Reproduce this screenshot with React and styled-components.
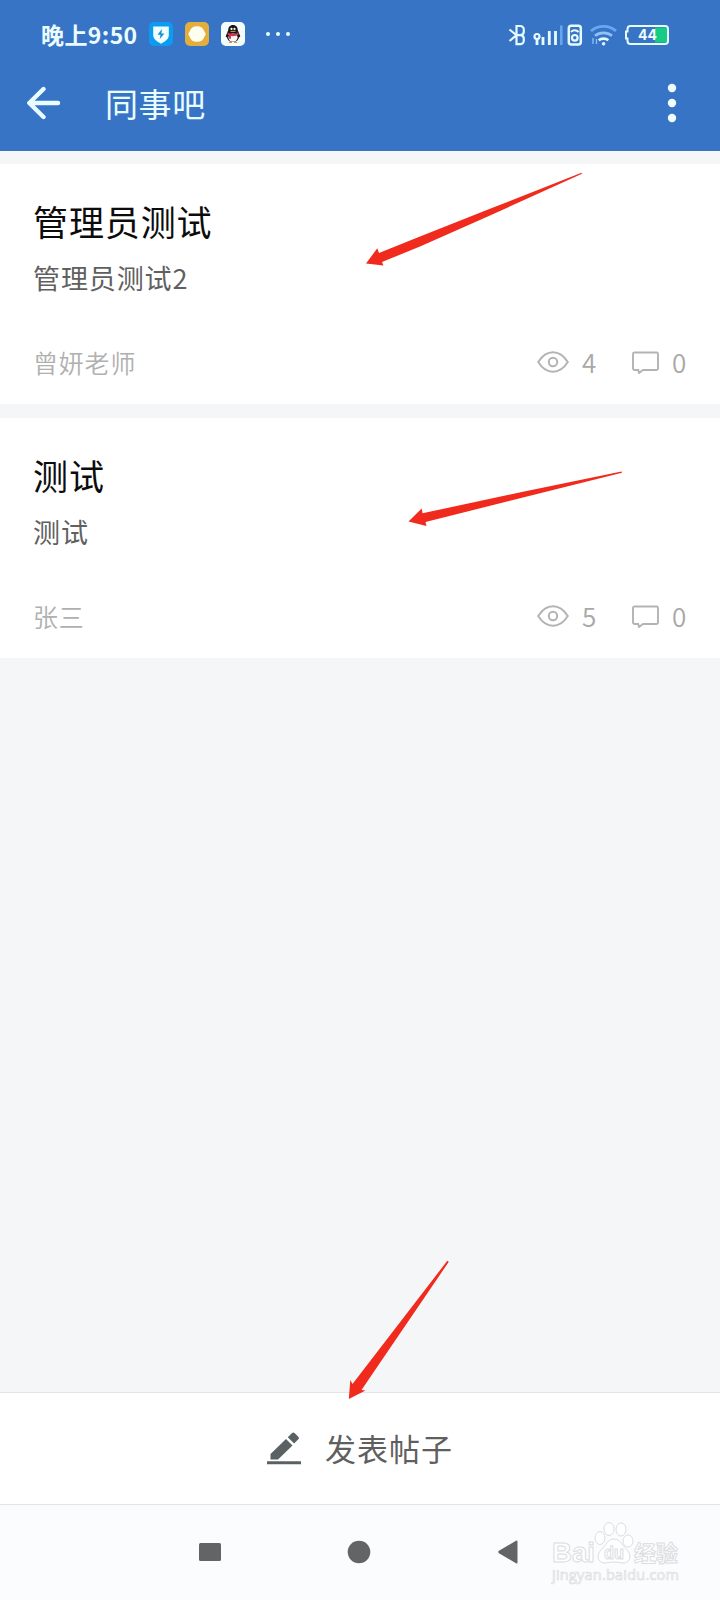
import styled, { createGlobalStyle } from "styled-components";

const posts = [
  { id: 1, title: "管理员测试", text: "管理员测试2", author: "曾妍老师", views: 4, comments: 0 },
  { id: 2, title: "测试", text: "测试", author: "张三", views: 5, comments: 0 },
];

const StatusBar = () => {
  return (
    <StatusWrapper>
      <Clock>晚上9:50</Clock>
      <AppIcons>
        <svg width="24" height="24" viewBox="0 0 24 24">
          <rect width="24" height="24" rx="5" fill="#0b9bf0" />
          <path d="M4.200 4.500h15.600v8.500c0 4-3.600 6.500-7.800 8.700-4.200-2.200-7.800-4.700-7.800-8.700z" fill="#effeff" />
          <path d="M13 7l-4.500 5.700h3l-.8 4.200 4.700-5.400h-3z" fill="#1590c8" />
        </svg>
        <svg width="24" height="24" viewBox="0 0 24 24">
          <rect width="24" height="24" rx="5" fill="#e3ae3b" />
          <path d="M12 4.300c4 0 6 1.900 7 4.500l1.800 3.200-1.800 3.400c-1 2.600-3 4.300-7 4.300s-6-1.700-7-4.300L3.200 12 5 8.800c1-2.600 3-4.500 7-4.500z" fill="#fffff0" />
        </svg>
        <svg width="24" height="24" viewBox="0 0 24 24">
          <rect width="24" height="24" rx="5" fill="#f4fdfc" />
          <path d="M12 3c-3.200 0-4.800 2.400-4.800 5.200L5 13.500c-.5 1.600.1 2.300 1 1.200 0 2.700 2.200 5.300 6 5.300s6-2.600 6-5.300c.9 1.100 1.500.4 1-1.200l-2.200-5.300C16.800 5.400 15.200 3 12 3z" fill="#17151a" />
          <ellipse cx="12" cy="15.600" rx="4.600" ry="4.200" fill="#fff4f4" />
          <path d="M6.800 10.300c3 2 7.400 2 10.400 0l.4 2.200c-2.500 1.600-5.500 1.900-7.600 1.500v2.800H8v-3.400l-1.600-.9z" fill="#cf3551" />
          <circle cx="10.500" cy="6.900" r="1.100" fill="#fff" />
          <circle cx="13.500" cy="6.900" r="1.100" fill="#fff" />
          <path d="M9.500 9.400h5" stroke="#d9a22e" strokeWidth="1" />
          <path d="M7.800 20.400h3.200M13 20.400h3.200" stroke="#c79a50" strokeWidth="1.300" />
        </svg>
      </AppIcons>
      <svg width="26" height="4" viewBox="0 0 26 4" fill="#e8feff">
        <circle cx="3" cy="2" r="2" />
        <circle cx="13" cy="2" r="2" />
        <circle cx="23" cy="2" r="2" />
      </svg>
      <SystemIcons>
        <svg width="162" height="24" viewBox="0 0 162 24" fill="none" stroke="#e6fbff" strokeWidth="2.200">
          <path d="M1.500 6.500L8.500 12.200 1.500 18M8.500 12.200h4M8.500 3h3.700a3.600 3.600 0 0 1 3.600 3.600v2a3.600 3.600 0 0 1-3.300 3.600 3.600 3.600 0 0 1 3.300 3.600v1.800a3.600 3.600 0 0 1-3.600 3.600H8.500z" />
          <circle cx="29" cy="13.500" r="2.500" />
          <path d="M29 16v6M35 14v8M41.300 8v14M47.500 8v14" strokeWidth="2.800" />
          <path d="M53.300 2.500v19.500" stroke="#6aa7f2" strokeWidth="2.500" />
          <rect x="60.800" y="2.800" width="12" height="18.800" rx="2.500" strokeWidth="2.500" />
          <circle cx="66.800" cy="14.800" r="2.800" />
          <path d="M63 9c2-2.500 5.500-2.500 7.600 0" strokeWidth="2" />
          <g strokeWidth="2.700">
            <path d="M83 8c7-6.300 18-6.300 25 0" stroke="#6aa7f2" />
            <path d="M87 12.800c5-4 12-4 17 0" stroke="#8fc1f8" />
            <path d="M90.800 17.200c2.500-2 7-2 9.500 0" />
          </g>
          <path d="M85 15v6M88.500 16v5" stroke="#8fc1f8" strokeWidth="1.300" />
          <circle cx="95.600" cy="20.800" r="1.300" fill="#e6fbff" strokeWidth="1" />
          <path d="M147 4.500h10.500a2 2 0 0 1 2 2v11a2 2 0 0 1-2 2H147z" fill="#16cb83" stroke="none" />
          <path d="M122.500 3h34.500a3 3 0 0 1 3 3v12a3 3 0 0 1-3 3h-34.500a3 3 0 0 1-3-3v-2.500h-1.500v-7h1.500V6a3 3 0 0 1 3-3z" strokeWidth="2" />
        </svg>
        <Percent>44</Percent>
      </SystemIcons>
    </StatusWrapper>
  );
};

const Post = ({ post }) => {
  return (
    <Card>
      <h2>{post.title}</h2>
      <p>{post.text}</p>
      <CardFooter>
        <Author>{post.author}</Author>
        <svg width="32" height="22" viewBox="0 0 32 22" fill="none" stroke="#b3b3b3" strokeWidth="2">
          <path d="M1.200 11C5 5 9.500 1.200 16 1.200S27 5 30.800 11C27 17 22.500 20.800 16 20.800S5 17 1.200 11z" />
          <circle cx="16" cy="11" r="4.200" />
        </svg>
        <Count $gap="13px">{post.views}</Count>
        <CommentIcon width="27" height="23" viewBox="0 0 27 23" fill="none" stroke="#b3b3b3" strokeWidth="1.900">
          <path d="M3 1.500h21.500a1.500 1.500 0 0 1 1.500 1.500v14.500a1.500 1.500 0 0 1-1.500 1.500H11L7 22l-.8-3H3A1.800 1.800 0 0 1 1 17.500V3A1.500 1.500 0 0 1 3 1.500z" />
        </CommentIcon>
        <Count $gap="13px">{post.comments}</Count>
      </CardFooter>
    </Card>
  );
};

const App = () => {
  return (
    <Page>
      <GlobalStyle />
      <Header>
        <StatusBar />
        <TitleBar>
          <svg width="34" height="34" viewBox="0 0 34 34" fill="none" stroke="#e9fcff" strokeWidth="4.400" strokeLinecap="round" strokeLinejoin="round">
            <path d="M16.500 3L2.300 17l14.200 14M3 17h28" />
          </svg>
          <h1>同事吧</h1>
          <svg width="10" height="40" viewBox="0 0 10 40" fill="#effdff">
            <circle cx="5" cy="5" r="4.200" />
            <circle cx="5" cy="20" r="4.200" />
            <circle cx="5" cy="35" r="4.200" />
          </svg>
        </TitleBar>
      </Header>
      <Feed>
        {posts.map((post) => (
          <Post key={post.id} post={post} />
        ))}
      </Feed>
      <Compose>
        <svg width="34" height="33" viewBox="0 0 34 33" fill="#5a6163">
          <path d="M3.500 27.500v-5.500L19 7l6.500 6.500-14.500 14zM20.800 5.200L25 1a1.800 1.800 0 0 1 2.500 0l3.800 3.800a1.800 1.800 0 0 1 0 2.500l-4.200 4.200z" />
          <path d="M0 29.300h34v3H0z" />
        </svg>
        <span>发表帖子</span>
      </Compose>
      <NavBar>
        <svg width="22" height="24" viewBox="0 0 22 24" fill="#636465">
          <rect y="3" width="22" height="18" rx="1.500" />
        </svg>
        <svg width="24" height="24" viewBox="0 0 24 24" fill="#636465">
          <circle cx="12" cy="12" r="11.300" />
        </svg>
        <svg width="21" height="24" viewBox="0 0 21 24" fill="#636465">
          <path d="M20.500 1.500v21a1 1 0 0 1-1.500.8L2 13.200a1.500 1.500 0 0 1 0-2.400L19 .8a1 1 0 0 1 1.500.7z" />
        </svg>
        <Watermark>
          <svg width="130" height="66" viewBox="0 0 130 66" fill="#fff" stroke="#dcdddf" strokeWidth="1">
            <g fontFamily="'Liberation Sans', 'Noto Sans CJK SC', sans-serif" fontWeight="700">
              <text x="1" y="41" fontSize="28" textLength="43" lengthAdjust="spacingAndGlyphs">Bai</text>
              <ellipse cx="49" cy="17" rx="5" ry="6.500" />
              <ellipse cx="58" cy="8" rx="5" ry="6.500" />
              <ellipse cx="70" cy="8.500" rx="5" ry="6.500" />
              <ellipse cx="77" cy="20" rx="5" ry="6" />
              <path d="M63 18c-6 0-8 6-12 10-6 5-5 13 2 14 4 0 6-1 10-1s6 1 10 1c7-1 8-9 2-14-4-4-6-10-12-10z" />
              <text x="53" y="38" fontSize="18" textLength="20" lengthAdjust="spacingAndGlyphs">du</text>
              <text x="83" y="40" fontSize="22" textLength="44">经验</text>
            </g>
            <text x="1" y="59" fontSize="14.500" fontFamily="Open Sans, sans-serif" textLength="127" strokeWidth=".7">jingyan.baidu.com</text>
          </svg>
        </Watermark>
      </NavBar>
      {/* red pointers drawn over the page */}
      <Arrows viewBox="0 0 720 1600">
        <path d="M366 263.500L377.300 248.300L379 253L420 236.500L490 208.800L581.500 172.800L582 173.800L490 215.500L420 246.500L382 262L383.500 265.500Z" />
        <path d="M408.500 521.500L421.700 508.500L422.500 513.300L523 491.700L621.500 471.500L622 472.800L523 497.500L425.500 522L426.500 526Z" />
        <path d="M348.800 1399L350.300 1380L352.500 1384L447.300 1260.800L448.800 1261.800L372.700 1373.500L361.500 1390L365.500 1390.500Z" />
      </Arrows>
    </Page>
  );
};

const GlobalStyle = createGlobalStyle`
  * {
    margin: 0;
    padding: 0;
    box-sizing: border-box;
  }

  body {
    font-family: "Noto Sans CJK SC", sans-serif;
    background: #f5f6f8;
  }

  svg {
    display: block;
    flex: none;
  }
`;

const Page = styled.div`
  position: relative;
  width: 720px;
  height: 1600px;
  display: flex;
  flex-direction: column;
  overflow: hidden;
`;

const Header = styled.header`
  height: 151px;
  background: #3874c5;
`;

const StatusWrapper = styled.div`
  display: flex;
  align-items: center;
  height: 68px;
  padding: 0 50px 0 41px;
`;

const Clock = styled.span`
  width: 108px;
  padding-bottom: 1px;
  color: #e9fcff;
  font-size: 23px;
  font-weight: 700;
  line-height: 24px;
  letter-spacing: 0.4px;
  white-space: nowrap;
`;

const AppIcons = styled.div`
  display: flex;
  gap: 12px;
  margin-right: 20px;
`;

const SystemIcons = styled.div`
  position: relative;
  margin-left: auto;
  padding-top: 2px;
`;

const Percent = styled.span`
  position: absolute;
  right: 13px;
  top: 5px;
  color: #f0fffb;
  font-family: Inter, sans-serif;
  font-size: 14px;
  font-weight: 700;
  line-height: 18px;
`;

const TitleBar = styled.div`
  display: flex;
  align-items: center;
  height: 70px;
  padding: 0 43px 0 27px;

  h1 {
    flex: 1;
    margin-left: 44px;
    color: #e9fcff;
    font-size: 33px;
    font-weight: 400;
    line-height: 40px;
    letter-spacing: 0.6px;
  }
`;

const Feed = styled.main`
  flex: 1;
  display: flex;
  flex-direction: column;
  gap: 14px;
  padding-top: 13px;
`;

const Card = styled.article`
  height: 240px;
  padding: 34px 32px 0 33px;
  background: #fff;

  h2 {
    color: #0c0c0c;
    font-size: 35px;
    font-weight: 400;
    line-height: 46px;
    letter-spacing: 0.9px;
  }

  p {
    margin-top: 16px;
    color: #606060;
    font-size: 27px;
    line-height: 36px;
    letter-spacing: 0.9px;
  }
`;

const CardFooter = styled.div`
  display: flex;
  align-items: center;
  height: 36px;
  margin-top: 48px;
  color: #b0b0b0;
`;

const Author = styled.span`
  flex: 1;
  font-size: 25px;
  font-weight: 350;
  letter-spacing: 0.8px;
`;

const Count = styled.span`
  width: 16px;
  padding-bottom: 1px;
  margin-left: ${({ $gap }) => $gap};
  color: #a8a8a8;
  font-size: 26px;
  font-weight: 350;
  line-height: 36px;
`;

const CommentIcon = styled.svg`
  margin-left: 34px;
`;

const Compose = styled.footer`
  display: flex;
  align-items: center;
  justify-content: center;
  gap: 24px;
  height: 112px;
  background: #fff;
  border-top: 1px solid #e3e4e6;
  color: #5f5f5f;
  font-size: 31px;
  letter-spacing: 1px;

  span {
    padding-bottom: 3px;
  }
`;

const NavBar = styled.nav`
  display: flex;
  align-items: center;
  height: 96px;
  padding: 0 0 2px 199px;
  background: #fbfcfe;
  border-top: 1px solid #e3e4e6;

  svg + svg {
    margin-left: 126px;
  }
`;

const Watermark = styled.div`
  margin-left: 33px;
  padding-top: 4px;
`;

const Arrows = styled.svg`
  position: absolute;
  inset: 0;
  width: 720px;
  height: 1600px;
  fill: #f02a1c;
  pointer-events: none;
`;

export default App;
